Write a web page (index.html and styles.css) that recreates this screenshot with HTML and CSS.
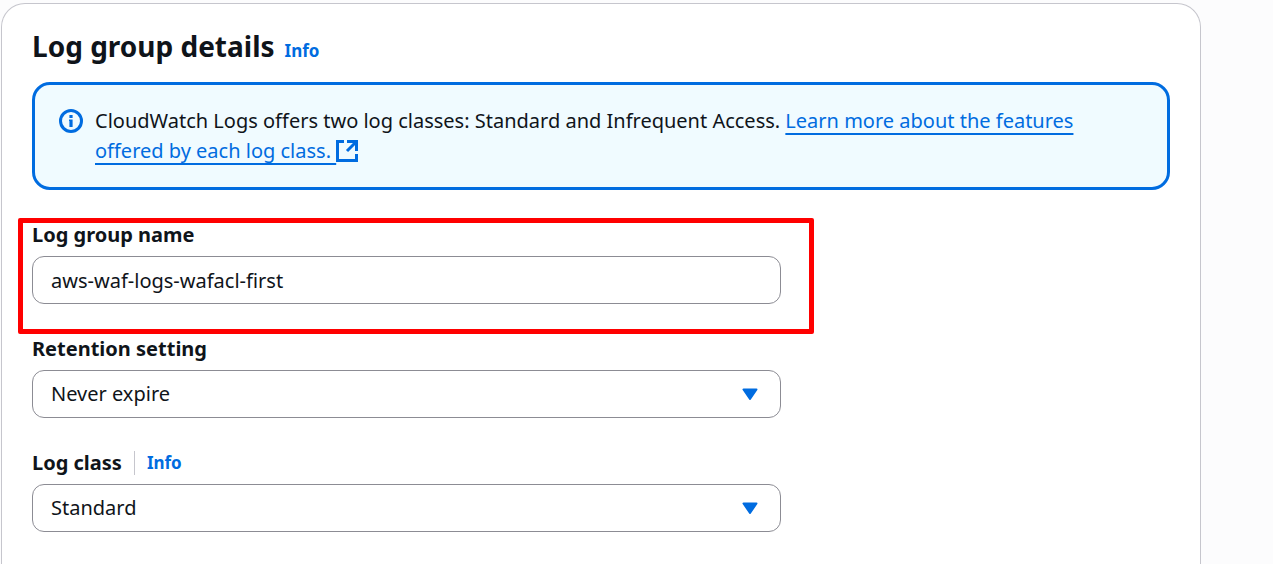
FILE: index.html
```html
<!DOCTYPE html>
<html lang="en">
<head>
<meta charset="utf-8">
<meta name="viewport" content="width=device-width, initial-scale=1">
<title>Log group details</title>
<link rel="stylesheet" href="styles.css">
</head>
<body>
<main class="card">
  <header class="card-header">
    <h2 class="title">Log group details</h2>
    <a class="info" href="#details-info">Info</a>
  </header>

  <div class="alert">
    <svg class="alert-icon" viewBox="0 0 24 24" aria-hidden="true">
      <circle cx="12" cy="12" r="10.5" fill="none" stroke="currentColor" stroke-width="3"/>
      <path d="M10.400 6h3.200v3h-3.200zM10 10.500h3.600V18h-3.200v-6H10z" fill="currentColor"/>
    </svg>
    <p class="alert-text">CloudWatch Logs offers two log classes: Standard and Infrequent Access. <a class="link" href="#log-classes">Learn more about the features offered by each log class. <svg class="external" viewBox="0 0 22 22" aria-hidden="true"><path d="M8 1.500H1.500V20.500H20.500V14M11 1.500H20.500V11M20.500 1.500L11 11" fill="none" stroke="currentColor" stroke-width="3"/></svg></a></p>
  </div>

  <form class="form">
    <div class="field highlighted">
      <div class="label-row"><label class="label" for="name">Log group name</label></div>
      <input class="control" id="name" type="text" value="aws-waf-logs-wafacl-first">
    </div>
    <div class="field">
      <div class="label-row"><label class="label" for="retention">Retention setting</label></div>
      <div class="select-wrap">
        <select class="control" id="retention"><option>Never expire</option></select>
        <svg class="caret" viewBox="0 0 16 12" aria-hidden="true"><path d="M1.500 1.500h13L8 11z"/></svg>
      </div>
    </div>
    <div class="field">
      <div class="label-row">
        <label class="label" for="class">Log class</label>
        <span class="divider"></span>
        <a class="info" href="#class-info">Info</a>
      </div>
      <div class="select-wrap">
        <select class="control" id="class"><option>Standard</option></select>
        <svg class="caret" viewBox="0 0 16 12" aria-hidden="true"><path d="M1.500 1.500h13L8 11z"/></svg>
      </div>
    </div>
  </form>
</main>
</body>
</html>
```
FILE: styles.css
```css
* {
  box-sizing: border-box;
}

body {
  margin: 0;
  min-height: 100vh;
  display: flex;
  padding: 3px 72px 0 1px;
  background: #fcfcfd;
  color: #0f141a;
  font-family: "Noto Sans", "Open Sans", sans-serif;
  font-size: 20px;
  line-height: 30px;
}

.card {
  flex: 1;
  min-width: 0;
  padding: 24px 30px 30px;
  background: #fff;
  border: 1px solid #c6c6cd;
  border-bottom: 0;
  border-radius: 24px 24px 0 0;
}

.card-header {
  display: flex;
  align-items: baseline;
  gap: 10px;
  margin-bottom: 18px;
}

.title {
  margin: 0;
  font-size: 28px;
  line-height: 36px;
  font-weight: 700;
}

.info {
  color: #006ce0;
  font-size: 17px;
  line-height: 24px;
  font-weight: 700;
  text-decoration: none;
}

.alert {
  display: flex;
  align-items: flex-start;
  gap: 12px;
  margin-bottom: 30px;
  padding: 21px 24px;
  background: #f0fbff;
  border: 3px solid #006ce0;
  border-radius: 18px;
}

.alert-icon {
  flex: none;
  width: 24px;
  height: 24px;
  margin: 3px 0;
  color: #006ce0;
}

.alert-text {
  margin: 0;
}

.link {
  color: #006ce0;
  text-decoration: underline;
  text-decoration-thickness: 2px;
  text-underline-offset: 5px;
}

.external {
  width: 22px;
  height: 22px;
  vertical-align: -4px;
}

.form {
  display: grid;
  grid-template-columns: 2fr 1fr;
  column-gap: 15px;
  row-gap: 30px;
}

.field {
  grid-column: 1;
  display: flex;
  flex-direction: column;
  gap: 6px;
  position: relative;
}

.highlighted::after {
  content: "";
  position: absolute;
  inset: -2px -33px -30px -14px;
  border: 5px solid #f00;
  border-radius: 2px;
  pointer-events: none;
}

.label-row {
  display: flex;
  align-items: center;
  gap: 12px;
}

.label {
  font-weight: 700;
}

.divider {
  width: 1px;
  height: 24px;
  background: #c6c6cd;
}

.select-wrap {
  display: grid;
  align-items: center;
}

.control {
  grid-area: 1 / 1;
  appearance: none;
  width: 100%;
  height: 48px;
  margin: 0;
  padding: 0 18px;
  background: #fff;
  border: 1px solid #8c8c94;
  border-radius: 12px;
  color: inherit;
  font: inherit;
}

.caret {
  grid-area: 1 / 1;
  justify-self: end;
  width: 16px;
  height: 12px;
  margin-right: 23px;
  fill: #006ce0;
  stroke: #006ce0;
  stroke-width: 2px;
  stroke-linejoin: round;
  pointer-events: none;
}
```
